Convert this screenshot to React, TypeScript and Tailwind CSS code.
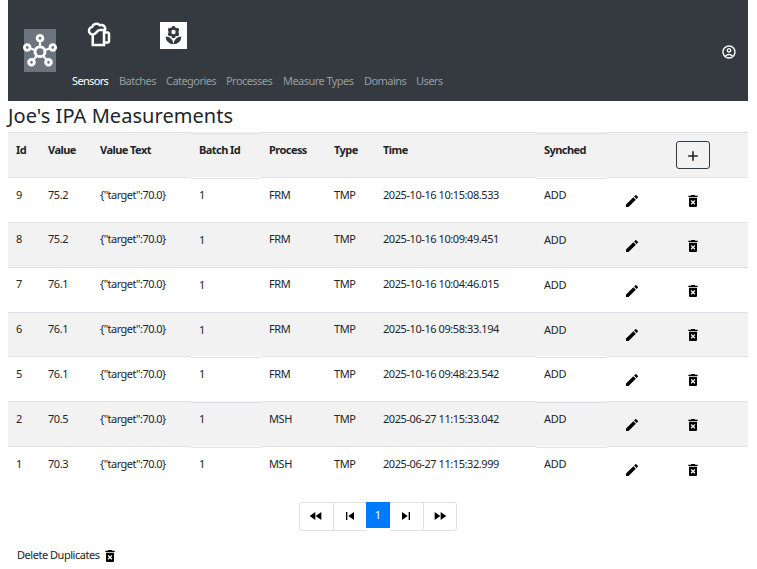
import {
  MdOutlineHub,
  MdOutlineSportsBar,
  MdLocalFlorist,
  MdOutlineAccountCircle,
  MdEdit,
  MdDeleteForever,
  MdFastRewind,
  MdFastForward,
  MdSkipPrevious,
  MdSkipNext,
} from "react-icons/md";
import clsx from "clsx";

const nav = [
  { label: "Sensors", width: "w-[47px]" },
  { label: "Batches", width: "w-[47px]" },
  { label: "Categories", width: "w-[60px]" },
  { label: "Processes", width: "w-[57px]" },
  { label: "Measure Types", width: "w-[81px]" },
  { label: "Domains", width: "w-[52px]" },
  { label: "Users", width: "w-[40px]" },
];

// height: row height; step: the Batch Id and Synched cells sit one pixel lower;
// text / altText: top padding of ordinary cells and of those two columns.
const rows = [
  { values: ["9", "75.2", "FRM", "2025-10-16 10:15:08.533"], height: "h-[45px]", step: true, text: "pt-[8px]", altText: "pt-[7px]", icons: "pt-[15px]" },
  { values: ["8", "75.2", "FRM", "2025-10-16 10:09:49.451"], height: "h-[45px]", step: false, text: "pt-[7px]", altText: "pt-[8px]", icons: "pt-[15px]" },
  { values: ["7", "76.1", "FRM", "2025-10-16 10:04:46.015"], height: "h-[45px]", step: false, text: "pt-[7px]", altText: "pt-[8px]", icons: "pt-[15px]" },
  { values: ["6", "76.1", "FRM", "2025-10-16 09:58:33.194"], height: "h-[44px]", step: false, text: "pt-[7px]", altText: "pt-[8px]", icons: "pt-[14px]" },
  { values: ["5", "76.1", "FRM", "2025-10-16 09:48:23.542"], height: "h-[45px]", step: true, text: "pt-[8px]", altText: "pt-[7px]", icons: "pt-[15px]" },
  { values: ["2", "70.5", "MSH", "2025-06-27 11:15:33.042"], height: "h-[45px]", step: true, text: "pt-[8px]", altText: "pt-[7px]", icons: "pt-[15px]" },
  { values: ["1", "70.3", "MSH", "2025-06-27 11:15:32.999"], height: "h-[45px]", step: true, text: "pt-[8px]", altText: "pt-[7px]", icons: "pt-[15px]" },
];

const grid = "grid grid-cols-[32px_52px_99px_70px_65px_49px_161px_71px_141px]";
const cell = "border-t border-[#dee2e6] pl-2 leading-[17px]";
const isAlt = (j: number) => j === 3 || j === 7;

export default function App() {
  return (
    <div className="h-[569px] w-[757px] overflow-hidden bg-white px-2 font-['Noto_Sans',sans-serif] text-[11px] text-[#212529]">
      <div className="w-[740px]">
        <nav className="flex h-[101px] bg-[#343a40]">
          <div className="ml-4 mt-[29px] flex h-[43px] w-8 items-center justify-center bg-[#6c757d] text-white">
            <MdOutlineHub size={34} className="shrink-0" />
          </div>
          <div className="ml-4 flex-1">
            <div className="flex h-[73px] items-start pt-[20px] text-white">
              <MdOutlineSportsBar size={30} className="ml-[12px]" />
              <div className="ml-[45.5px] mt-[1.5px] flex h-[27px] w-[27px] items-center justify-center bg-white text-[#343a40]">
                <MdLocalFlorist size={21} />
              </div>
            </div>
            <div className="flex leading-[15px] tracking-[-0.55px]">
              {nav.map((n, i) => (
                <a
                  key={n.label}
                  className={clsx("whitespace-nowrap", n.width, i === 0 ? "tracking-[-0.65px] text-white" : "text-[#999c9f]")}
                >
                  {n.label}
                </a>
              ))}
            </div>
          </div>
          <MdOutlineAccountCircle size={16} className="mr-[11px] mt-[44px] text-white" />
        </nav>
        <h1 className="h-[31px] text-[20px] leading-[29px] tracking-[0.05px]">Joe's IPA Measurements</h1>
        <div>
          <div className={clsx(grid, "h-[45px] bg-[#f2f2f2] font-bold tracking-[-0.55px]")}>
            {["Id", "Value", "Value Text", "Batch Id", "Process", "Type", "Time", "Synched"].map((h, j) => (
              <div key={h} className={clsx(cell, isAlt(j) ? "mt-px pt-[7px]" : "pt-[8px]")}>{h}</div>
            ))}
            <div className="border-t border-[#dee2e6] pl-[69px] pt-2">
              <button className="flex h-7 w-[34px] items-center justify-center rounded-[3px] border border-[#343a40]">
                <svg viewBox="0 0 16 16" className="mt-px size-4 fill-none stroke-current stroke-[1.6]">
                  <path d="M8 3.2v9.6M3.2 8h9.6" />
                </svg>
              </button>
            </div>
          </div>
          {rows.map(({ values: [id, value, process, time], height, step, text, altText, icons }, i) => (
            <div key={id} className={clsx(grid, height, i % 2 === 1 && "bg-[#f2f2f2]")}>
              {[id, value, '{"target":70.0}', "1", process, "TMP", time, "ADD"].map((c, j) => (
                <div
                  key={j}
                  className={clsx(
                    cell,
                    isAlt(j) ? altText : text,
                    isAlt(j) && step && "mt-px",
                    j === 7 ? "tracking-[-0.25px]" : j === 2 ? "tracking-[-0.54px]" : "tracking-[-0.43px]",
                  )}
                >
                  {c}
                </div>
              ))}
              <div className={clsx("flex border-t border-[#dee2e6] pl-[17px] text-black", icons)}>
                <MdEdit size={16} />
                <MdDeleteForever size={16} className="ml-[45px]" />
              </div>
            </div>
          ))}
        </div>
        <div className="mt-[11px] flex h-[29px] pl-[291px] text-black">
          <div className="flex w-[35px] items-center justify-center rounded-l-[3px] border border-[#dee2e6] pb-px pr-px">
            <MdFastRewind size={16} />
          </div>
          <div className="-ml-px flex w-[34px] items-center justify-center border border-r-0 border-[#dee2e6] pb-px pr-[2px]">
            <MdSkipPrevious size={16} />
          </div>
          <div className="-ml-px flex h-[26px] w-6 items-center justify-center bg-[#007bff] pt-px text-white">1</div>
          <div className="flex w-[34px] items-center justify-center border border-l-0 border-[#dee2e6] pb-px pr-[2px]">
            <MdSkipNext size={16} />
          </div>
          <div className="-ml-px flex w-[34px] items-center justify-center rounded-r-[3px] border border-[#dee2e6] pb-px">
            <MdFastForward size={16} />
          </div>
        </div>
        <div className="mt-[16px] flex items-center pl-[9px] tracking-[-0.47px]">
          Delete Duplicates
          <MdDeleteForever size={16} className="ml-[2px] mt-px text-black" />
        </div>
      </div>
    </div>
  );
}
